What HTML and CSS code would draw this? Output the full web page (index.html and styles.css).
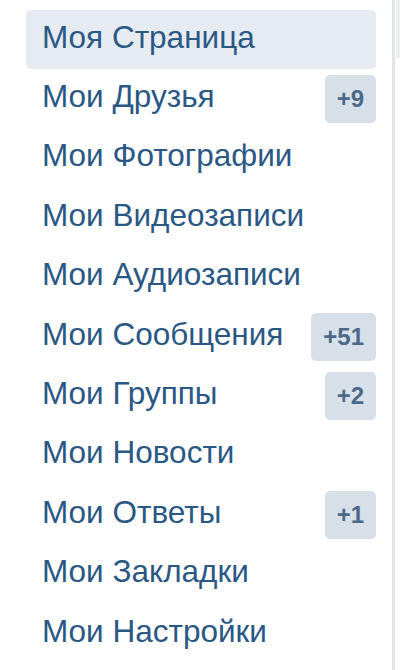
FILE: index.html
```html
<!DOCTYPE html>
<html lang="ru">
<head>
    <meta charset="UTF-8">
    <meta name="viewport" content="width=device-width, initial-scale=1.0">
    <title>Меню</title>
    <link rel="stylesheet" href="styles.css">
</head>
<body>
    <div class="page">
        <ul class="menu">
            <li class="item active"><span class="label">Моя Страница</span></li>
            <li class="item"><span class="label">Мои Друзья</span><span class="badge">+9</span></li>
            <li class="item"><span class="label">Мои Фотографии</span></li>
            <li class="item"><span class="label">Мои Видеозаписи</span></li>
            <li class="item"><span class="label">Мои Аудиозаписи</span></li>
            <li class="item"><span class="label">Мои Сообщения</span><span class="badge">+51</span></li>
            <li class="item"><span class="label">Мои Группы</span><span class="badge">+2</span></li>
            <li class="item"><span class="label">Мои Новости</span></li>
            <li class="item"><span class="label">Мои Ответы</span><span class="badge">+1</span></li>
            <li class="item"><span class="label">Мои Закладки</span></li>
            <li class="item"><span class="label">Мои Настройки</span></li>
        </ul>
        <div class="divider"></div>
        <div class="side">
            <div class="side-top"></div>
        </div>
    </div>
</body>
</html>
```

FILE: styles.css
```css
body {
    margin: 0;
    background-color: #fff;
    font-family: "Liberation Sans", Arial, sans-serif;
}

.page {
    display: flex;
    height: 670px;
}

.menu {
    list-style: none;
    margin: 0;
    padding: 10px 0 0 26px;
    width: 350px;
}

.item {
    display: flex;
    align-items: center;
    justify-content: space-between;
    height: 59.4px;
    padding-left: 16px;
    border-radius: 5px;
    color: #2a5885;
    font-size: 31.5px;
}

.item .label {
    padding-bottom: 5px;
}

.item.active {
    background-color: #e5ebf1;
}

.badge {
    height: 48px;
    line-height: 48px;
    padding: 0 12px;
    border-radius: 5px;
    background-color: #d7dfe8;
    color: #4b6889;
    font-size: 24px;
    font-weight: bold;
}

.divider {
    width: 3px;
    margin-left: 16px;
    background-color: #e0e5eb;
}

.side {
    flex: 1;
    padding-left: 1px;
}

.side-top {
    height: 58px;
    background-color: #eef1f4;
}
```
